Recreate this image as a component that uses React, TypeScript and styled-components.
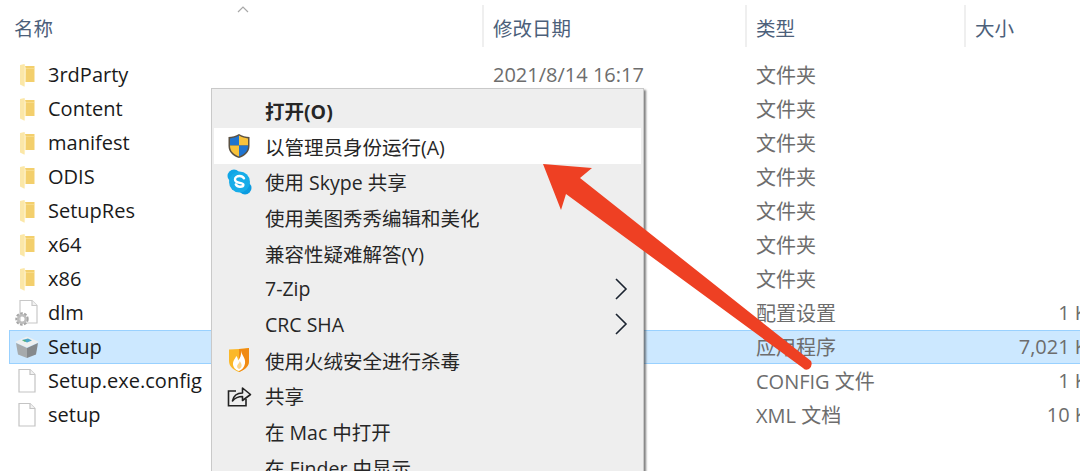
import React from "react";
import styled, { createGlobalStyle } from "styled-components";

const Global = createGlobalStyle`
  html, body { margin: 0; padding: 0; background: #fff; overflow: hidden; }
  #root { width: 1080px; height: 471px; overflow: hidden; }
`;

const fontStack = `"Open Sans", "Noto Sans CJK SC", sans-serif`;

const Page = styled.div`
  position: relative;
  width: 1080px;
  height: 471px;
  overflow: hidden;
  background: #fff;
  font-family: ${fontStack};
`;

const Header = styled.div`
  display: grid;
  grid-template-columns: 484px 263px 219px 134px;
  width: 1100px;
  height: 47px;
  padding-top: 5px;
  margin-bottom: 11px;
  box-sizing: border-box;
`;

const HeaderCell = styled.div<{ $first?: boolean }>`
  position: relative;
  display: flex;
  align-items: center;
  padding-left: ${(p) => (p.$first ? "14px" : "9px")};
  padding-top: 2px;
  font-size: 19.5px;
  color: #4c607a;
  border-right: 2px solid #efefef;
  box-sizing: border-box;
  &:last-child { border-right: none; }
`;

const SortCaret = styled.svg`
  position: absolute;
  left: 237px;
  top: 0;
`;

const Rows = styled.div`
  display: flex;
  flex-direction: column;
  width: 1091px;
  margin-left: 9px;
`;

const Row = styled.div<{ $selected?: boolean }>`
  display: grid;
  grid-template-columns: 474px 263px 219px 135px;
  align-items: center;
  height: 34px;
  padding-bottom: 1px;
  box-sizing: border-box;
  font-size: 20px;
  background: ${(p) => (p.$selected ? "#cce8ff" : "transparent")};
  box-shadow: ${(p) => (p.$selected ? "inset 0 0 0 1px #99d1ff" : "none")};
`;

const NameCell = styled.div`
  display: flex;
  align-items: center;
  color: #1a1a1a;
`;

const IconSlot = styled.span`
  display: flex;
  justify-content: center;
  width: 28px;
  margin: 0 7px 0 4px;
`;

const MetaCell = styled.div<{ $right?: boolean }>`
  color: #6d6d6d;
  padding-left: ${(p) => (p.$right ? "0" : "10px")};
  text-align: ${(p) => (p.$right ? "right" : "left")};
  white-space: nowrap;
`;

const Menu = styled.div`
  position: absolute;
  left: 211px;
  top: 88px;
  width: 427px;
  height: 400px;
  padding: 3.5px 2px 0;
  background: #eeeeee;
  border: 1px solid #c9c9c9;
  box-shadow: 2px 2px 2px rgba(60, 60, 60, 0.65);
  font-size: 19.5px;
  color: #262626;
`;

const MenuItem = styled.div<{ $active?: boolean; $bold?: boolean }>`
  position: relative;
  display: flex;
  align-items: center;
  height: 35.7px;
  padding-left: 51px;
  background: ${(p) => (p.$active ? "#fff" : "transparent")};
  font-weight: ${(p) => (p.$bold ? 700 : 400)};
  white-space: nowrap;
`;

const MenuIcon = styled.span`
  position: absolute;
  left: 12px;
  top: 50%;
  width: 26px;
  transform: translateY(-50%);
  display: flex;
  justify-content: center;
`;

const Chevron = styled.svg`
  position: absolute;
  right: 13px;
  top: 50%;
  transform: translateY(-50%);
`;

const ArrowLayer = styled.svg`
  position: absolute;
  left: 0;
  top: 0;
  pointer-events: none;
`;

const Folder = () => (
  <svg width="17" height="24" viewBox="0 0 17 24">
    <path d="M6 3 H15.5 V19 H6 Z" fill="#f3cf6c" />
    <path d="M1 2 L5.5 1 L6.6 5 H15.5 V5.6 H7 L7 19 L6 19 V23 L5 23.5 L1 21.5 Z" fill="#fbe7a8" />
    <path d="M5.5 1 L6.6 5 L6 23 L5 23.5 Z" fill="#fdf0c4" />
  </svg>
);

const FileIcon = () => (
  <svg width="20" height="26" viewBox="0 0 20 26">
    <path d="M2 1.5 H13 L18 6.5 V24 H2 Z" fill="#fff" stroke="#c4c4c4" strokeWidth="1.2" />
    <path d="M13 1.5 V6.5 H18" fill="#f2f2f2" stroke="#c4c4c4" strokeWidth="1.2" />
  </svg>
);

const GearFile = () => (
  <svg width="24" height="28" viewBox="0 0 24 28">
    <path d="M5 1.5 H17 L22 6.5 V24 H5 Z" fill="#fff" stroke="#c8c8c8" strokeWidth="1.2" />
    <path d="M17 1.5 V6.5 H22" fill="#f2f2f2" stroke="#c8c8c8" strokeWidth="1.2" />
    <circle cx="7" cy="20" r="5.2" fill="none" stroke="#a6a6a6" strokeWidth="3" strokeDasharray="2.4 1.3" />
    <circle cx="7" cy="20" r="3.8" fill="none" stroke="#bdbdbd" strokeWidth="2.6" />
  </svg>
);

const SetupBox = () => (
  <svg width="26" height="24" viewBox="0 0 26 24">
    <path d="M1 7 L13 1.5 L25 7 L13 12.5 Z" fill="#eef0f0" />
    <path d="M2 8 L13 13 L13 23 L4 19.5 Z" fill="#a6aaac" />
    <path d="M24 8 L13 13 L13 23 L22 19.5 Z" fill="#85898c" />
    <path d="M8 5 L14 3.5 L18 5.5 L13 7.5 Z" fill="#4aa7c9" />
    <path d="M8 5.5 L11.5 5 L11.5 7 Z" fill="#58b36a" />
  </svg>
);

const Shield = () => (
  <svg width="24" height="26" viewBox="0 0 24 26">
    <path d="M12 1 C9 3 5 4 1.5 4 V13 C1.5 19 6 23 12 25 C18 23 22.5 19 22.5 13 V4 C19 4 15 3 12 1 Z" fill="#5b5142" />
    <path d="M12 2.6 C9 4.4 6 5.2 3 5.4 V12.5 H12 Z" fill="#1f74d0" />
    <path d="M12 2.6 C15 4.4 18 5.2 21 5.4 V12.5 H12 Z" fill="#f8c23b" />
    <path d="M3 12.5 H12 V23.4 C7 21.8 3 18.2 3 13 Z" fill="#f8c23b" />
    <path d="M21 12.5 H12 V23.4 C17 21.8 21 18.2 21 13 Z" fill="#1f74d0" />
  </svg>
);

const SkypeIcon = () => (
  <svg width="25" height="26" viewBox="0 0 25 26">
    <circle cx="7" cy="7" r="6.5" fill="#0fa5e6" />
    <circle cx="18" cy="19" r="6.5" fill="#0b9be0" />
    <circle cx="12.5" cy="13" r="10.5" fill="#17ace8" />
    <path d="M17 9.3 C16 7.6 14.4 7 12.6 7 C10 7 8 8.4 8 10.4 C8 15 16.4 12.8 16.4 15.8 C16.4 17 15 17.8 13 17.8 C11 17.8 9.6 17 8.8 15.4" fill="none" stroke="#fff" strokeWidth="2.4" strokeLinecap="round" />
  </svg>
);

const FlameShield = () => (
  <svg width="22" height="26" viewBox="0 0 22 26">
    <path d="M1 2.4 Q11 2.4 21 1 V14 C21 20 16 23 11 25 C6 23 1 20 1 14 Z" fill="#fbb829" />
    <path d="M11 2 Q16 2 21 1 V14 C21 20 16 23 11 25 Z" fill="#f08a14" />
    <path d="M13 3.5 C13.5 8 18 11 17 16.5 C16.4 20.5 13.5 23 11 24 C7.5 23 4.6 20 5 16 C5.3 13 7.5 11.5 8.2 9 C9.6 10.4 10 12 10 13.4 C12 11.4 13.6 8 13 3.5 Z" fill="#fff" />
    <path d="M11.8 14 C13 16 14 17.4 13.5 19.4 C13 21 12 21.8 11 22 C9.4 21.5 8.8 20 9.2 18.6 C9.8 17 11.4 16.2 11.8 14 Z" fill="#fbd48c" />
  </svg>
);

const ShareIcon = () => (
  <svg width="26" height="24" viewBox="0 0 26 24" fill="none" stroke="#222" strokeWidth="1.6">
    <path d="M10 7 H2.5 V21.8 H20 V15" />
    <path d="M6.5 17 C7.5 11.5 11 9 16.5 9 V4 L24.5 10.5 L16.5 16.5 V12.5 C12 12.5 9 14 6.5 17 Z" strokeLinejoin="round" />
  </svg>
);

const SubChevron = () => (
  <Chevron width="14" height="24" viewBox="0 0 14 24" fill="none" stroke="#1b2430" strokeWidth="1.6">
    <path d="M2 2 L12 12 L2 22" />
  </Chevron>
);

type FileRow = { name: string; icon: React.ReactNode; date?: string; type: string; size?: string; selected?: boolean };

const files: FileRow[] = [
  { name: "3rdParty", icon: <Folder />, date: "2021/8/14 16:17", type: "文件夹" },
  { name: "Content", icon: <Folder />, type: "文件夹" },
  { name: "manifest", icon: <Folder />, type: "文件夹" },
  { name: "ODIS", icon: <Folder />, type: "文件夹" },
  { name: "SetupRes", icon: <Folder />, type: "文件夹" },
  { name: "x64", icon: <Folder />, type: "文件夹" },
  { name: "x86", icon: <Folder />, type: "文件夹" },
  { name: "dlm", icon: <GearFile />, type: "配置设置", size: "1 KB" },
  { name: "Setup", icon: <SetupBox />, type: "应用程序", size: "7,021 KB", selected: true },
  { name: "Setup.exe.config", icon: <FileIcon />, type: "CONFIG 文件", size: "1 KB" },
  { name: "setup", icon: <FileIcon />, type: "XML 文档", size: "10 KB" },
];

type MenuEntry = { label: string; icon?: React.ReactNode; bold?: boolean; active?: boolean; sub?: boolean };

const menu: MenuEntry[] = [
  { label: "打开(O)", bold: true },
  { label: "以管理员身份运行(A)", icon: <Shield />, active: true },
  { label: "使用 Skype 共享", icon: <SkypeIcon /> },
  { label: "使用美图秀秀编辑和美化" },
  { label: "兼容性疑难解答(Y)" },
  { label: "7-Zip", sub: true },
  { label: "CRC SHA", sub: true },
  { label: "使用火绒安全进行杀毒", icon: <FlameShield /> },
  { label: "共享", icon: <ShareIcon /> },
  { label: "在 Mac 中打开" },
  { label: "在 Finder 中显示" },
];

export default function App() {
  return (
    <Page>
      <Global />
      <Header>
        <HeaderCell $first>
          名称
          <SortCaret width="12" height="8" viewBox="0 0 12 8" fill="none" stroke="#a8a8a8" strokeWidth="1.2">
            <path d="M1 7 L6 2 L11 7" />
          </SortCaret>
        </HeaderCell>
        <HeaderCell>修改日期</HeaderCell>
        <HeaderCell>类型</HeaderCell>
        <HeaderCell>大小</HeaderCell>
      </Header>
      <Rows>
        {files.map((f) => (
          <Row key={f.name} $selected={f.selected}>
            <NameCell>
              <IconSlot>{f.icon}</IconSlot>
              {f.name}
            </NameCell>
            <MetaCell>{f.date}</MetaCell>
            <MetaCell>{f.type}</MetaCell>
            <MetaCell $right>{f.size}</MetaCell>
          </Row>
        ))}
      </Rows>
      <Menu>
        {menu.map((m) => (
          <MenuItem key={m.label} $active={m.active} $bold={m.bold}>
            {m.icon && <MenuIcon>{m.icon}</MenuIcon>}
            {m.label}
            {m.sub && <SubChevron />}
          </MenuItem>
        ))}
      </Menu>
      <ArrowLayer width="1080" height="471" viewBox="0 0 1080 471">
        <path
          d="M543 164 L592 168 L580 178 L811 361 Q813 366 809 369 Q805 371 803 368 L566 194 L561 210 Z"
          fill="#ee4023"
        />
      </ArrowLayer>
    </Page>
  );
}
